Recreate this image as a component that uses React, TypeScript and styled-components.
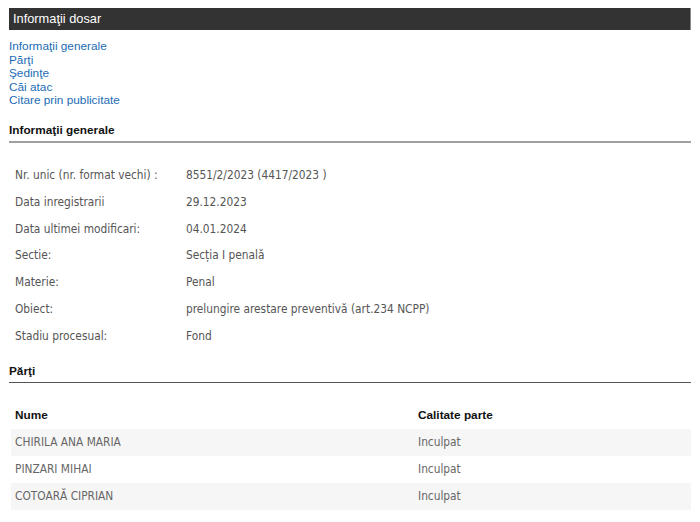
import React from 'react';
import styled, { createGlobalStyle } from 'styled-components';

const GlobalStyle = createGlobalStyle`
  html, body {
    margin: 0;
    padding: 0;
    background: #fff;
  }
`;

const Page = styled.div`
  padding: 8px 9px 12px 9px;
  font-family: 'Liberation Sans', Arial, sans-serif;
`;

const TitleBar = styled.div`
  height: 22px;
  background: #333333;
  border-right: 1px solid #8a8a8a;
  color: #fff;
  font-size: 12.8px;
  line-height: 22px;
  padding-left: 4px;
`;

const Nav = styled.nav`
  display: flex;
  flex-direction: column;
  align-items: flex-start;
  margin-top: 10px;
`;

const NavLink = styled.a`
  color: #1b6cb5;
  font-size: 11.8px;
  line-height: 13.6px;
  text-decoration: none;
  cursor: pointer;
`;

const SectionTitle = styled.h3<{ $line: string; $weight: number; $gap: number }>`
  margin: ${p => p.$gap}px 0 0 0;
  padding: 0 0 4px 0;
  font-size: 11.8px;
  line-height: 14px;
  font-weight: bold;
  color: #111;
  border-bottom: ${p => p.$weight}px solid ${p => p.$line};
`;

const InfoList = styled.div`
  display: grid;
  grid-template-columns: 171px 1fr;
  margin-top: 19px;
  font-family: 'DejaVu Sans Condensed', 'DejaVu Sans', sans-serif;
  font-stretch: condensed;
  font-size: 11.8px;
  color: #555;
`;

const InfoCell = styled.div`
  height: 26.8px;
  line-height: 26.8px;
  padding-left: 6px;
  white-space: nowrap;
`;

const PartyTable = styled.table`
  width: calc(100% - 2px);
  margin: 18px 0 0 2px;
  border-collapse: collapse;
`;

const Th = styled.th<{ $width?: number }>`
  width: ${p => (p.$width ? `${p.$width}px` : 'auto')};
  height: 28px;
  padding: 0 4px;
  text-align: left;
  font-family: 'Liberation Sans', Arial, sans-serif;
  font-size: 11.8px;
  font-weight: bold;
  color: #111;
`;

const Row = styled.tr<{ $shaded: boolean }>`
  background: ${p => (p.$shaded ? '#f6f6f6' : '#fff')};
`;

const Td = styled.td`
  height: 27px;
  padding: 0 4px;
  font-family: 'DejaVu Sans Condensed', 'DejaVu Sans', sans-serif;
  font-stretch: condensed;
  font-size: 11.8px;
  color: #666;
  white-space: nowrap;
`;

const links = [
  'Informaţii generale',
  'Părţi',
  'Şedinţe',
  'Căi atac',
  'Citare prin publicitate',
];

const info: [string, string][] = [
  ['Nr. unic (nr. format vechi) :', '8551/2/2023 (4417/2023 )'],
  ['Data inregistrarii', '29.12.2023'],
  ['Data ultimei modificari:', '04.01.2024'],
  ['Sectie:', 'Secția I penală'],
  ['Materie:', 'Penal'],
  ['Obiect:', 'prelungire arestare preventivă (art.234 NCPP)'],
  ['Stadiu procesual:', 'Fond'],
];

const parti = [
  { nume: 'CHIRILA ANA MARIA', calitate: 'Inculpat' },
  { nume: 'PINZARI MIHAI', calitate: 'Inculpat' },
  { nume: 'COTOARĂ CIPRIAN', calitate: 'Inculpat' },
];

const App: React.FC = () => {
  return (
    <>
      <GlobalStyle />
      <Page>
        <TitleBar>Informaţii dosar</TitleBar>

        <Nav>
          {links.map(l => (
            <NavLink key={l}>{l}</NavLink>
          ))}
        </Nav>

        <SectionTitle $line="#a0a0a0" $weight={2} $gap={15}>Informaţii generale</SectionTitle>
        <InfoList>
          {info.map(([label, value]) => (
            <React.Fragment key={label}>
              <InfoCell>{label}</InfoCell>
              <InfoCell>{value}</InfoCell>
            </React.Fragment>
          ))}
        </InfoList>

        <SectionTitle $line="#555" $weight={1} $gap={14}>Părţi</SectionTitle>
        <PartyTable>
          <thead>
            <tr>
              <Th $width={395}>Nume</Th>
              <Th>Calitate parte</Th>
            </tr>
          </thead>
          <tbody>
            {parti.map((p, i) => (
              <Row key={p.nume} $shaded={i % 2 === 0}>
                <Td>{p.nume}</Td>
                <Td>{p.calitate}</Td>
              </Row>
            ))}
          </tbody>
        </PartyTable>
      </Page>
    </>
  );
};

export default App;
